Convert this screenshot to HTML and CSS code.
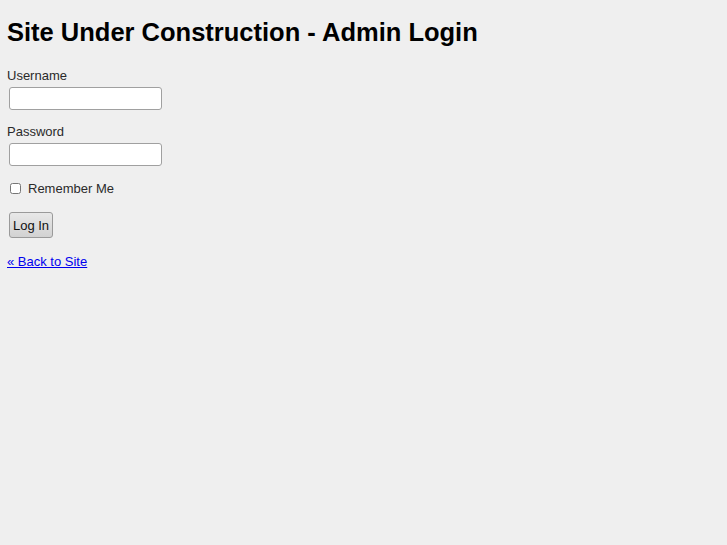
FILE: index.html
```html
<!DOCTYPE html>
<html lang="en">
<head>
  <meta charset="UTF-8">
  <title>Site Under Construction - Admin Login</title>
  <link rel="stylesheet" href="styles.css">
</head>
<body>
  <h1>Site Under Construction - Admin Login</h1>
  <form class="login" name="loginform">
    <div class="campo">
      <label for="user_login">Username</label>
      <input type="text" id="user_login" name="log">
    </div>
    <div class="campo">
      <label for="user_pass">Password</label>
      <input type="password" id="user_pass" name="pwd">
    </div>
    <div class="recordar">
      <input type="checkbox" id="rememberme" name="rememberme">
      <label for="rememberme">Remember Me</label>
    </div>
    <div class="enviar">
      <button type="submit">Log In</button>
    </div>
  </form>
  <p class="volver"><a href="#">&laquo; Back to Site</a></p>
</body>
</html>
```

FILE: styles.css
```css
/* --- General --- */
body {
  font-family: "Liberation Sans", Arial, sans-serif;
  font-size: 13px;
  line-height: 15px;
  background: #efefef;
  color: #2a2a2a;
  margin: 0;
  padding: 8px 7px;
}

h1 {
  font-size: 25.5px;
  line-height: 30px;
  font-weight: bold;
  color: #000;
  margin: 9px 0 21px;
}

/* --- Form --- */
.login {
  display: flex;
  flex-direction: column;
  gap: 14px;
}

.campo {
  display: flex;
  flex-direction: column;
  align-items: flex-start;
  gap: 4px;
}

.campo input {
  width: 153px;
  height: 23px;
  margin: 0 2px;
  padding: 1px 3px;
  border: 1px solid #a0a0a0;
  border-radius: 3px;
  background: #fff;
  box-sizing: border-box;
}

.recordar {
  display: flex;
  align-items: center;
  gap: 7px;
  margin-top: 1px;
}

.recordar input {
  width: 11px;
  height: 11px;
  margin: 0 0 0 3px;
}

.enviar {
  margin-top: 2px;
}

.enviar button {
  font-family: "Liberation Sans", Arial, sans-serif;
  font-size: 13px;
  color: #111;
  margin: 0 2px;
  width: 44px;
  height: 26px;
  padding: 0;
  border: 1px solid #9a9a9a;
  border-radius: 3px;
  background: linear-gradient(#e8e8e8, #d2d2d2);
}

.volver {
  margin: 16px 0 0;
}

.volver a {
  color: #0000ee;
}
```
